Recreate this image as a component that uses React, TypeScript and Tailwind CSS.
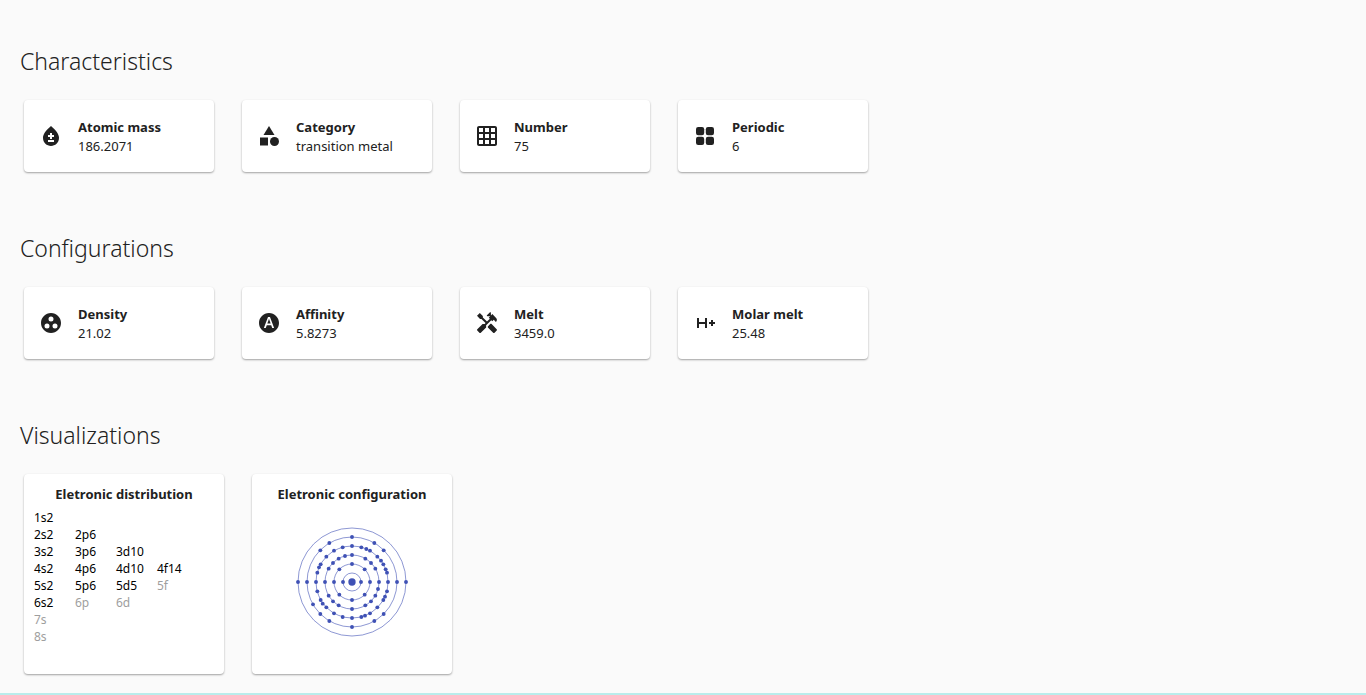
import type { ComponentType } from "react";
import {
  MdBloodtype,
  MdCategory,
  MdGridOn,
  MdGroupWork,
  MdHandyman,
  MdHdrAuto,
  MdHPlusMobiledata,
} from "react-icons/md";

type IconProps = { className?: string };
type Fact = { label: string; value: string; Icon: ComponentType<IconProps> };

function GridRounded({ className }: IconProps) {
  return (
    <svg viewBox="0 0 24 24" fill="currentColor" className={className} aria-hidden="true">
      <rect x="3" y="3" width="8.2" height="8.2" rx="2.2" />
      <rect x="12.8" y="3" width="8.2" height="8.2" rx="2.2" />
      <rect x="3" y="12.8" width="8.2" height="8.2" rx="2.2" />
      <rect x="12.8" y="12.8" width="8.2" height="8.2" rx="2.2" />
    </svg>
  );
}

const characteristics: Fact[] = [
  { label: "Atomic mass", value: "186.2071", Icon: MdBloodtype },
  { label: "Category", value: "transition metal", Icon: MdCategory },
  { label: "Number", value: "75", Icon: MdGridOn },
  { label: "Periodic", value: "6", Icon: GridRounded },
];

const configurations: Fact[] = [
  { label: "Density", value: "21.02", Icon: MdGroupWork },
  { label: "Affinity", value: "5.8273", Icon: MdHdrAuto },
  { label: "Melt", value: "3459.0", Icon: MdHandyman },
  { label: "Molar melt", value: "25.48", Icon: MdHPlusMobiledata },
];

const subshells: string[][] = [
  ["1s2"],
  ["2s2", "2p6"],
  ["3s2", "3p6", "3d10"],
  ["4s2", "4p6", "4d10", "4f14"],
  ["5s2", "5p6", "5d5", "5f"],
  ["6s2", "6p", "6d"],
  ["7s"],
  ["8s"],
];

const shellRadii = [27, 54, 81, 108, 135, 162];

const electrons: [number, number][] = [
  [174, 200], [228, 200],
  [163, 162], [201, 146], [239, 162], [147, 200], [255, 200], [163, 238], [201, 254], [239, 238],
  [120, 200], [282, 200], [131, 160], [144, 143], [161, 130], [180, 122], [201, 119], [241, 130], [258, 143],
  [271, 160], [279, 221], [271, 241], [258, 258], [241, 270], [201, 281], [161, 270], [144, 258], [131, 241],
  [93, 200], [309, 200], [97, 172], [102, 156], [107, 147], [124, 124], [147, 106], [173, 96], [201, 92],
  [229, 96], [244, 101], [255, 106], [277, 124], [288, 136], [295, 147], [302, 162], [306, 172], [306, 228],
  [300, 244], [295, 254], [277, 276], [255, 294], [240, 301], [229, 305], [201, 308], [173, 305], [147, 294],
  [124, 276], [113, 265], [107, 254], [97, 228],
  [66, 200], [336, 200], [106, 105], [133, 83], [201, 65], [268, 83], [296, 105], [84, 267], [106, 296],
  [133, 317], [201, 335], [268, 317], [296, 296],
  [39, 200], [363, 200],
];

function Heading({ children }: { children: string }) {
  return <h2 className="text-[23px] leading-8 font-light">{children}</h2>;
}

function FactCard({ label, value, Icon }: Fact) {
  return (
    <li className="flex h-18 w-[190px] items-center gap-[15px] rounded bg-white px-[15px] shadow-[0_1px_2px_rgba(0,0,0,0.36)]">
      <Icon className="size-6 shrink-0" />
      <div className="pt-0.5 text-[13px] leading-[19px]">
        <h3 className="font-bold">{label}</h3>
        <p>{value}</p>
      </div>
    </li>
  );
}

function FactSection({ title, facts }: { title: string; facts: Fact[] }) {
  return (
    <section>
      <Heading>{title}</Heading>
      <ul className="mt-[23px] flex flex-wrap gap-7 px-1">
        {facts.map((fact) => (
          <FactCard key={fact.label} {...fact} />
        ))}
      </ul>
    </section>
  );
}

function DistributionTable() {
  return (
    <table className="mx-[10px] mt-[5px] text-[12px] leading-[17px] text-black">
      <tbody>
        {subshells.map((row) => (
          <tr key={row[0]}>
            {row.map((name) => (
              <td key={name} className={name.length > 2 ? "w-[41px] p-0" : "w-[41px] p-0 text-[#9e9e9e]"}>
                {name}
              </td>
            ))}
          </tr>
        ))}
      </tbody>
    </table>
  );
}

function AtomDiagram() {
  return (
    <svg viewBox="30 29 342 342" className="mx-auto mt-[21px] size-[114px]" role="img" aria-label="Electron shells">
      {shellRadii.map((r) => (
        <circle key={r} cx="201" cy="200" r={r} fill="none" stroke="#3f51b5" strokeWidth="1.8" />
      ))}
      <circle cx="201" cy="200" r="11" fill="#3f51b5" />
      {electrons.map(([x, y]) => (
        <circle key={`${x}-${y}`} cx={x} cy={y} r="5.8" fill="#3f51b5" />
      ))}
    </svg>
  );
}

export default function App() {
  return (
    <div className="min-h-screen bg-[#fafafa] font-['Noto_Sans','Open_Sans',sans-serif] text-[#212121]">
      <main className="flex flex-col gap-[60px] px-5 pt-[45px] pb-[19px]">
        <FactSection title="Characteristics" facts={characteristics} />
        <FactSection title="Configurations" facts={configurations} />
        <section>
          <Heading>Visualizations</Heading>
          <div className="mt-[23px] flex flex-wrap gap-7 px-1">
            <article className="h-[200px] w-[200px] rounded bg-white pt-[10px] shadow-[0_1px_2px_rgba(0,0,0,0.36)]">
              <h3 className="text-center text-[13px] leading-5 font-bold">Eletronic distribution</h3>
              <DistributionTable />
            </article>
            <article className="h-[200px] w-[200px] rounded bg-white pt-[10px] shadow-[0_1px_2px_rgba(0,0,0,0.36)]">
              <h3 className="text-center text-[13px] leading-5 font-bold">Eletronic configuration</h3>
              <AtomDiagram />
            </article>
          </div>
        </section>
      </main>
      <footer className="h-0.5 bg-[#b9eceb]" />
    </div>
  );
}
